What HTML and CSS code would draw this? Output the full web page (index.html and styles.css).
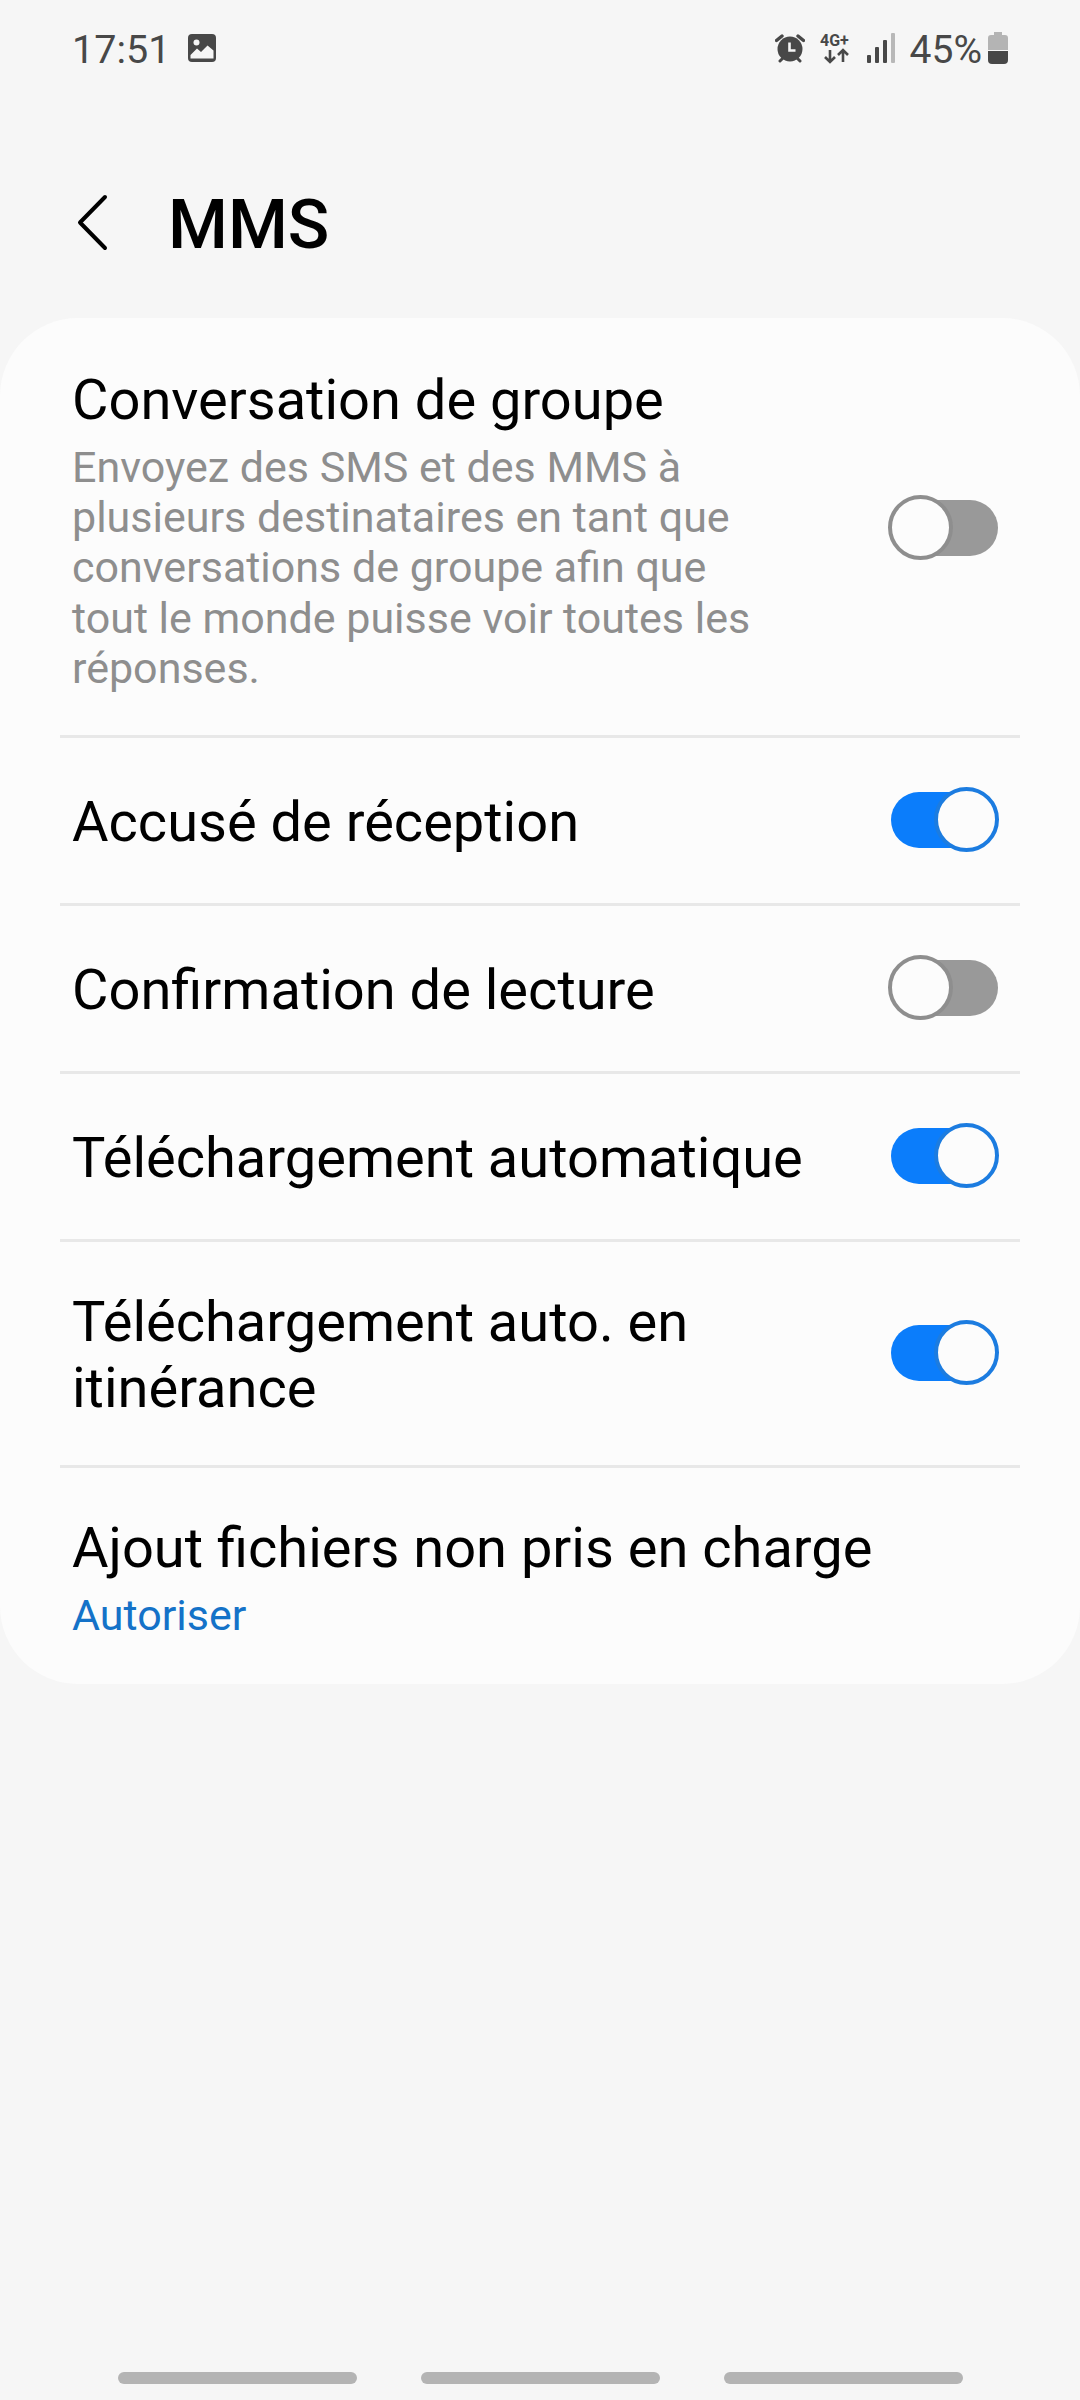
FILE: index.html
```html
<!DOCTYPE html>
<html lang="fr">
<head>
  <meta charset="UTF-8" />
  <meta name="viewport" content="width=device-width, initial-scale=1" />
  <title>MMS</title>
  <link rel="stylesheet" href="styles.css">
</head>
<body>

  <div class="status-bar">
    <div class="status-left">
      <span class="clock">17:51</span>
      <svg class="icon-gallery" viewBox="0 0 28 28" aria-hidden="true">
        <rect x="0" y="0" width="28" height="28" rx="4" fill="#484848" />
        <circle cx="8.5" cy="8.5" r="3" fill="#f6f6f6" />
        <path d="M2.5 24.5 V21 L9 14.5 L13 18 L19.5 11.5 L25.5 16.5 V24.5 Z" fill="#f6f6f6" />
      </svg>
    </div>
    <div class="status-right">
      <svg class="icon-alarm" viewBox="0 0 30 30" aria-hidden="true">
        <circle cx="15" cy="16" r="12.5" fill="#484848" />
        <path d="M1.5 7.5 L7 3 M28.5 7.5 L23 3" stroke="#484848" stroke-width="3.4" stroke-linecap="round" />
        <path d="M5 28 L7.5 25.5 M25 28 L22.5 25.5" stroke="#484848" stroke-width="3" stroke-linecap="round" />
        <path d="M14.5 9.5 V17.5 H20.5" fill="none" stroke="#f6f6f6" stroke-width="2.6" />
      </svg>
      <svg class="icon-network" viewBox="0 0 34 32" aria-hidden="true">
        <text x="0" y="14" class="network-label">4G+</text>
        <path d="M10 18 V30 M5 25 L10 30 L15 25" fill="none" stroke="#484848" stroke-width="2.6" />
        <path d="M23 30 V18 M18 23 L23 18 L28 23" fill="none" stroke="#484848" stroke-width="2.6" />
      </svg>
      <svg class="icon-signal" viewBox="0 0 28 30" aria-hidden="true">
        <rect x="0" y="22" width="4" height="8" rx="1" fill="#484848" />
        <rect x="8" y="14" width="4" height="16" rx="1" fill="#484848" />
        <rect x="16" y="7" width="4" height="23" rx="1" fill="#484848" />
        <rect x="24" y="0" width="4" height="30" rx="1" fill="#b8b8b8" />
      </svg>
      <span class="battery-text">45%</span>
      <svg class="icon-battery" viewBox="0 0 20 32" aria-hidden="true">
        <path d="M6 0 H14 V3 H17 Q20 3 20 6 V18 H0 V6 Q0 3 3 3 H6 Z" fill="#b4b4b4" />
        <path d="M0 19 H20 V28 Q20 32 16 32 H4 Q0 32 0 28 Z" fill="#484848" />
      </svg>
    </div>
  </div>

  <header class="app-bar">
    <svg class="icon-back" viewBox="0 0 32 58" aria-hidden="true">
      <path d="M29 3 L4 28.5 L29 54" fill="none" stroke="#000" stroke-width="4" stroke-linecap="round" stroke-linejoin="round" />
    </svg>
    <h1>MMS</h1>
  </header>

  <main class="card">
    <div class="row row-first">
      <div class="row-text">
        <p class="title">Conversation de groupe</p>
        <p class="summary">Envoyez des SMS et des MMS à plusieurs destinataires en tant que conversations de groupe afin que tout le monde puisse voir toutes les réponses.</p>
      </div>
      <span class="switch"></span>
    </div>
    <div class="row">
      <div class="row-text">
        <p class="title">Accusé de réception</p>
      </div>
      <span class="switch on"></span>
    </div>
    <div class="row">
      <div class="row-text">
        <p class="title">Confirmation de lecture</p>
      </div>
      <span class="switch"></span>
    </div>
    <div class="row">
      <div class="row-text">
        <p class="title">Téléchargement automatique</p>
      </div>
      <span class="switch on"></span>
    </div>
    <div class="row row-wrap">
      <div class="row-text">
        <p class="title">Téléchargement auto. en itinérance</p>
      </div>
      <span class="switch on"></span>
    </div>
    <div class="row row-last">
      <div class="row-text">
        <p class="title">Ajout fichiers non pris en charge</p>
        <p class="value">Autoriser</p>
      </div>
    </div>
  </main>

  <nav class="nav-bar" aria-label="Navigation">
    <span class="nav-pill"></span>
    <span class="nav-pill"></span>
    <span class="nav-pill"></span>
  </nav>

</body>
</html>
```

FILE: styles.css
```css
* {
  box-sizing: border-box;
  margin: 0;
  padding: 0;
}

body {
  width: 1080px;
  height: 2400px;
  display: flex;
  flex-direction: column;
  background: #f6f6f6;
  font-family: Roboto, "Noto Sans", sans-serif;
  color: #000;
  overflow: hidden;
}

/* Barre d'état */
.status-bar {
  height: 96px;
  display: flex;
  justify-content: space-between;
  align-items: center;
  padding: 0 72px;
  color: #484848;
}

.status-left,
.status-right {
  display: flex;
  align-items: center;
}

.clock {
  font-size: 39.5px;
  line-height: 44px;
  margin: 3px 18px 0 0;
}

.icon-gallery {
  width: 28px;
  height: 28px;
}

.icon-alarm {
  width: 30px;
  height: 30px;
  margin-right: 15px;
}

.icon-network {
  width: 34px;
  height: 32px;
  margin-right: 13px;
}

.network-label {
  font-size: 16px;
  font-weight: 700;
  fill: #484848;
}

.icon-signal {
  width: 28px;
  height: 30px;
  margin-right: 15px;
}

.battery-text {
  font-size: 39px;
  line-height: 44px;
  margin: 3px 6px 0 0;
}

.icon-battery {
  width: 20px;
  height: 32px;
}

/* En-tête */
.app-bar {
  height: 222px;
  display: flex;
  align-items: center;
  padding: 36px 0 0 76px;
}

.icon-back {
  width: 32px;
  height: 58px;
  margin: -5px 60px 0 0;
}

.app-bar h1 {
  font-size: 68.5px;
  font-weight: 500;
  line-height: 80px;
}

/* Carte */
.card {
  background: #fcfcfc;
  border-radius: 78px;
  padding: 0 60px;
}

.row {
  display: flex;
  align-items: center;
  justify-content: space-between;
  padding: 51px 22px 48px 12px;
  border-bottom: 3px solid #e8e8e8;
}

.row-first {
  padding-top: 49px;
  padding-bottom: 42px;
}

.row-wrap {
  padding-top: 47px;
  padding-bottom: 44px;
}

.row-wrap .title {
  max-width: 800px;
}

.row-last {
  padding-top: 47px;
  padding-bottom: 44px;
  border-bottom: none;
}

.row-text {
  flex: 1;
}

.title {
  font-size: 56px;
  line-height: 66px;
}

.summary {
  font-size: 43px;
  line-height: 50.2px;
  color: #8e8e8e;
  margin-top: 9px;
  max-width: 700px;
}

.value {
  font-size: 43px;
  line-height: 50px;
  color: #1472c8;
  margin-top: 9px;
}

/* Interrupteurs */
.switch {
  position: relative;
  flex: none;
  width: 107px;
  height: 56px;
  margin-top: -5px;
  border-radius: 28px;
  background: #999;
}

.switch::after {
  content: "";
  box-sizing: border-box;
  position: absolute;
  left: -3px;
  top: -5px;
  width: 65px;
  height: 65px;
  border-radius: 50%;
  background: #fcfcfc;
  border: 4px solid #8e8e8e;
}

.switch.on {
  background: #0b7dfb;
}

.switch.on::after {
  left: auto;
  right: -1px;
  border-color: #1c7ce0;
}

/* Barre de navigation */
.nav-bar {
  margin-top: auto;
  margin-bottom: 16px;
  display: flex;
  justify-content: center;
  gap: 64px;
}

.nav-pill {
  width: 239px;
  height: 12px;
  border-radius: 6px;
  background: #b4b4b4;
}
```
